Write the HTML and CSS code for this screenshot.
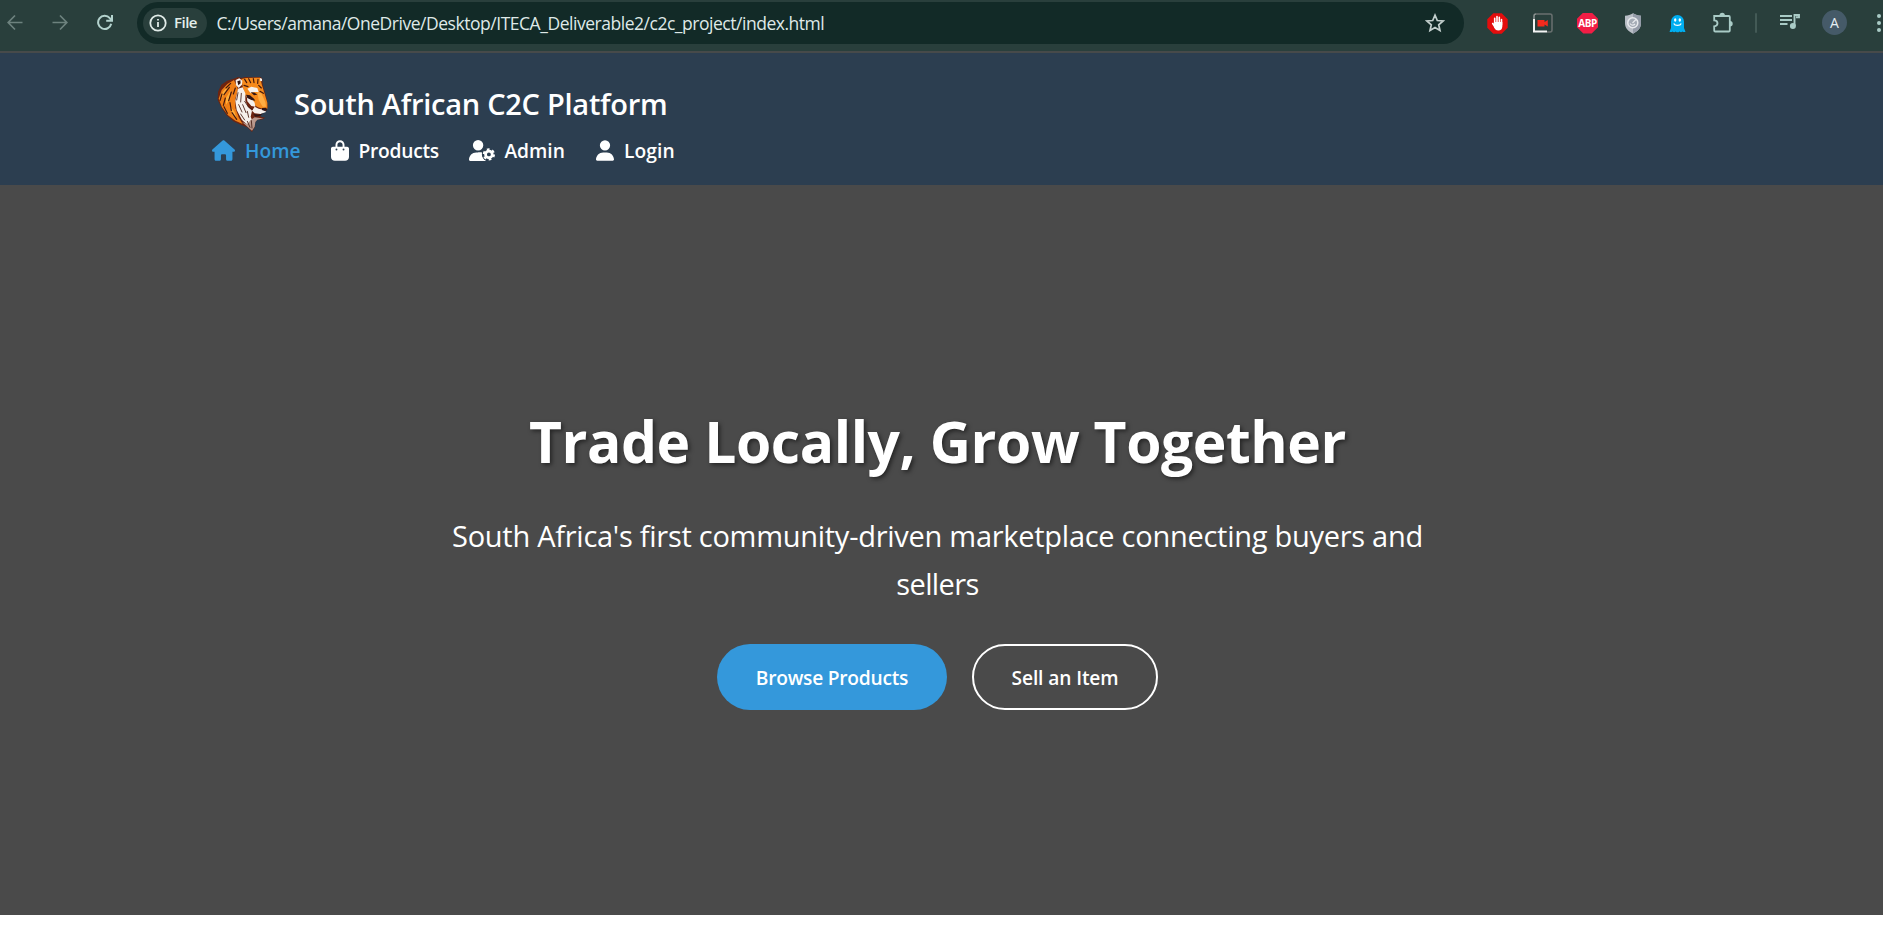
FILE: index.html
```
<!DOCTYPE html>
<html lang="en">
<head>
<meta charset="utf-8">
<title>South African C2C Platform</title>
<link rel="stylesheet" href="styles.css">
</head>
<body>
<div class="toolbar">
  <div class="controls">
    <svg class="ctl dim" viewBox="0 0 16 16"><path d="M15.500 8H1.500M8 1 1.200 8 8 15"/></svg>
    <svg class="ctl dim" viewBox="0 0 16 16"><path d="M.5 8h14M8 1l6.800 7L8 15"/></svg>
    <svg class="ctl" viewBox="0 0 16 16"><path d="M14.200 9.200A6.600 6.600 0 1 1 12.800 3.600L14.500 5.500M15 .5v5.700H9.200"/></svg>
  </div>
  <div class="omnibox">
    <div class="chip">
      <svg class="info" viewBox="0 0 18 18"><circle cx="9" cy="9" r="7.700"/><path d="M9 8v5M9 5v1.600"/></svg>
      <span class="chip-label">File</span>
    </div>
    <span class="url">C:/Users/amana/OneDrive/Desktop/ITECA_Deliverable2/c2c_project/index.html</span>
    <svg class="star" viewBox="0 0 20 20"><path d="M10 2.200l2.300 5.300 5.800.5-4.400 3.800 1.300 5.700-5-3-5 3 1.300-5.700L1.900 8l5.800-.5z"/></svg>
  </div>
  <div class="extensions">
    <div class="ext"><svg width="21" height="21" viewBox="0 0 21 21"><path fill="#e40d0d" d="M6.300.3h8.400l6 6v8.400l-6 6H6.300l-6-6V6.300z"/><path d="M7.700 11V5.300M10 10V3.600M12.300 10V4.300M14.500 12V6.500M5.700 10.500l2.600 4" stroke="#fff" stroke-width="1.600" stroke-linecap="round"/><path fill="#fff" d="M6.900 9h8.400v4.500c0 2.600-1.500 4-4 4-2.300 0-3.200-1-4.100-3z"/></svg></div>
    <div class="ext"><svg width="20" height="20" viewBox="0 0 20 20" fill="none"><path d="M3 1h14a2 2 0 0 1 2 2v14a2 2 0 0 1-2 2h-3" stroke="#69706f" stroke-width="1.500"/><path d="M1 6v12.500h13" stroke="#f4f4f4" stroke-width="2"/><path d="M1 6V3a2 2 0 0 1 2-2" stroke="#8b9291" stroke-width="1.500"/><path d="M4.500 7h7v2l3.300-2v6.500l-3.300-2v2h-7z" fill="#f42a1d"/></svg></div>
    <div class="ext"><div class="abp">ABP</div></div>
    <div class="ext"><svg width="18" height="21" viewBox="0 0 18 21"><path fill="#b9bec6" d="M9 .3c2.500 1.500 5 2.200 8 2.400v7.600c0 5-3.500 8.300-8 10.400C4.500 18.600 1 15.300 1 10.300V2.700C4 2.500 6.500 1.800 9 .3z"/><path fill="#959ca9" d="M9 .3c2.500 1.500 5 2.200 8 2.400v7.600c0 5-3.500 8.300-8 10.400z"/><circle cx="8.800" cy="9.700" r="5" fill="#a5acb6" stroke="#e8eaee" stroke-width="1.500"/><path d="M12 6.500 8.500 10M6 10.500a3 3 0 0 0 5 .5" stroke="#e8eaee" stroke-width="1.200" fill="none"/></svg></div>
    <div class="ext"><svg width="17" height="19" viewBox="0 0 17 19"><path fill="#00aef0" d="M2 7.500a6.500 6.500 0 0 1 13 0V14l1.500 3.700c-1.300.5-2.300.3-3-.3-.9 1-2.200 1-3 0-.9 1.200-2.900 1.200-3.800 0-.9 1-2.200 1-3.100 0-.8.6-1.900.8-3.100.3L2 14z"/><ellipse cx="6.200" cy="6" rx="1.200" ry="1.700" fill="#fff"/><ellipse cx="10.800" cy="6" rx="1.200" ry="1.700" fill="#fff"/><path d="M4.800 9.500c1 2.600 6.400 2.600 7.400 0" stroke="#fff" stroke-width="1.300" fill="none"/></svg></div>
    <div class="ext"><svg width="22" height="22" viewBox="0 0 22 22"><path d="M2.500 4h14.300q1 0 1 1v13.500q0 1-1 1H3.200q-1 0-1-1v-4.200c4.400-.3 4.400-5.600 0-5.900V4z" fill="none" stroke="#a9cbc6" stroke-width="1.800"/><path d="M7.500 3.500a2.700 2.700 0 0 1 5.400 0zM18 9a2.700 2.700 0 0 1 0 5.400z" fill="#a9cbc6"/></svg></div>
  </div>
  <div class="divider"></div>
  <svg class="media" viewBox="0 0 20 16"><path d="M0 2h12M0 6h12M0 10h7.500" stroke="#a9cbc6" stroke-width="1.800"/><path d="M14.500 12V1H19v2.200h-3" stroke="#a9cbc6" stroke-width="1.900" fill="none"/><circle cx="12.900" cy="12" r="3" fill="#a9cbc6"/></svg>
  <div class="avatar">A</div>
  <div class="menu"><i></i><i></i><i></i></div>
</div>

<header class="site-header">
  <div class="brand">
    <svg class="logo" viewBox="21 21 165 165">
      <path fill="#6e240f" d="M76 25L84 21 94 24 106 21 128 22 150 20 157 26 158 44 164 64 171 92 173 112 168 124 154 130 149 136 154 141 166 143 154 149 142 148 136 156 134 172 126 186 112 172 92 164 70 154 50 136 34 112 23 90 24 66 34 44 52 32z"/>
      <path fill="#f07f16" d="M72 30L52 42 35 60 26 86 36 112 54 136 76 152 98 162 86 142 76 114 76 86 84 58z"/>
      <path fill="#ffad3a" d="M56 46 38 66 32 86 44 72zM62 60 48 84 48 104 58 90zM62 110 66 134 80 148 74 126z"/>
      <path fill="#f58a1c" d="M94 27 110 24 150 23 156 46 164 72 172 98 172 116 158 116 144 112 134 106 120 96 106 76 98 50z"/>
      <path fill="#ffad43" d="M142 66 154 70 166 96 168 110 158 110 146 90z"/>
      <path fill="#f6f1ec" d="M77 30 88 25 97 32 96 44 86 54 78 46zM84 56 98 52 106 70 106 92 114 110 126 122 122 140 126 150 112 164 96 150 80 120 76 92zM112 56 124 50 142 54 146 66 132 66 122 70zM110 76 122 82 134 98 136 110 124 108 112 94zM134 110 146 116 164 120 168 126 152 132 134 130 126 122zM150 24 156 26 156 34 150 32z"/>
      <path fill="#b9988c" d="M96 156 112 162 122 150 134 142 150 144 160 145 142 149 136 156 134 170 126 182 114 172z"/>
      <path fill="#301515" d="M82 34 91 31 92 40 85 46zM108 74 120 76 132 86 136 92 124 90 112 84zM122 66 134 68 142 74 132 76zM156 114 169 113 171 120 164 123 156 120zM130 132 144 134 160 130 150 138 136 140z"/>
      <g fill="none" stroke="#41180f" stroke-linecap="round">
        <path stroke-width="3.500" d="M62 40 48 54M58 52 42 74M36 72 30 92M46 84 40 106M42 110 52 130M64 66 56 92M60 98 64 122M66 128 80 148M104 28 110 38M116 26 122 38M130 26 132 38M144 28 143 40M102 46 114 50M146 46 154 54M150 64 160 70M76 54 70 72"/>
        <path stroke-width="2.500" d="M104 94 116 112 128 118M84 68 80 90M94 70 92 96M86 104 96 126M98 104 108 128M112 124 116 142M92 132 104 150M112 154 120 172M124 152 126 174"/>
      </g>
    </svg>
    <span class="brand-name">South African C2C Platform</span>
  </div>
  <nav class="nav">
    <a class="nav-item active"><svg width="23" height="21" viewBox="0 0 576 512"><path d="M575.800 255.500c0 18-15 32.100-32 32.100h-32l.7 160.200c0 2.700-.2 5.400-.5 8.100V472c0 22.100-17.900 40-40 40H392c-22.100 0-40-17.900-40-40v-88c0-17.700-14.300-32-32-32h-64c-17.700 0-32 14.300-32 32v88c0 22.100-17.900 40-40 40h-80c-22.100 0-40-17.900-40-40V287.600H32c-18 0-32-14-32-32.100 0-9 3-17 10-24L266.400 8c7-7 15-8 22-8s15 2 21 7l255.400 224.500c8 7 12 15 11 24z"/></svg><span>Home</span></a>
    <a class="nav-item products"><svg width="18" height="21" viewBox="0 0 448 512"><path d="M160 112c0-35.300 28.700-64 64-64s64 28.700 64 64v48H160zm-48 48H48c-26.500 0-48 21.500-48 48v208c0 53 43 96 96 96h256c53 0 96-43 96-96V208c0-26.500-21.500-48-48-48h-64v-48C336 50.100 285.900 0 224 0S112 50.100 112 112zm24 48a24 24 0 1 1 0 48 24 24 0 1 1 0-48zm152 24a24 24 0 1 1 48 0 24 24 0 1 1-48 0z"/></svg><span>Products</span></a>
    <a class="nav-item admin"><svg width="26" height="21" viewBox="0 0 640 512"><path d="M224 256a128 128 0 1 0 0-256 128 128 0 1 0 0 256zm-45.700 48C79.800 304 0 383.800 0 482.300 0 498.700 13.300 512 29.700 512h388.600V304z"/><circle cx="490" cy="352" r="176" fill="#2c3e50"/><path d="M224 304h76c30 0 10 20 10 55 0 60 40 120 105 153H224z"/><circle cx="490" cy="352" r="82" fill="none" stroke="#fff" stroke-width="68"/><circle cx="490" cy="352" r="126" fill="none" stroke="#fff" stroke-width="50" stroke-dasharray="66 66"/></svg><span>Admin</span></a>
    <a class="nav-item login"><svg width="18" height="21" viewBox="0 0 448 512"><path d="M224 256a128 128 0 1 0 0-256 128 128 0 1 0 0 256zm-45.700 48C79.800 304 0 383.800 0 482.300 0 498.700 13.300 512 29.700 512h388.600c16.400 0 29.700-13.300 29.700-29.700C448 383.800 368.200 304 269.700 304z"/></svg><span>Login</span></a>
  </nav>
</header>

<main class="hero">
  <h1 class="hero-title">Trade Locally, Grow Together</h1>
  <p class="hero-text">South Africa's first community-driven marketplace connecting buyers and<br><span class="last-line">sellers</span></p>
  <div class="actions">
    <a class="btn primary">Browse Products</a>
    <a class="btn outline">Sell an Item</a>
  </div>
</main>
</body>
</html>
```
FILE: styles.css
```
* { box-sizing: border-box; }
body {
  margin: 0;
  background: #fff;
  font-family: "Open Sans", "Noto Sans", sans-serif;
  overflow: hidden;
}
svg { display: block; flex: none; }

.toolbar {
  display: flex;
  height: 53px;
  padding: 2px 0 0 7px;
  background: #293f3c;
  border-bottom: 2px solid #474a4a;
  overflow: hidden;
}
.toolbar > * { flex: none; }
.controls { display: flex; gap: 29px; width: 130px; padding-top: 12px; }
.ctl { width: 16px; height: 17px; fill: none; stroke: #b4d3ce; stroke-width: 2; }
.dim { stroke: #6d827e; stroke-width: 1.7; }
.omnibox {
  display: flex;
  align-items: center;
  width: 1327px;
  height: 42px;
  padding: 0 19px 0 6px;
  border-radius: 21px;
  background: #122a27;
}
.chip {
  display: flex;
  align-items: center;
  gap: 7px;
  width: 64px;
  height: 30px;
  padding-left: 6px;
  border-radius: 15px;
  background: #293f3c;
}
.info { width: 18px; height: 18px; fill: none; stroke: #e0ebe8; stroke-width: 1.8; }
.chip-label { color: #e3eeeb; font-size: 15px; font-weight: 600; line-height: 28px; letter-spacing: -0.5px; padding-bottom: 2px; }
.url { flex: 1; padding-left: 9.5px; color: #dfe9e7; font-size: 17.5px; line-height: 43px; letter-spacing: -0.47px; white-space: nowrap; }
.star { width: 20px; height: 20px; fill: none; stroke: #c3cfcd; stroke-width: 1.7; }
.extensions { display: flex; height: 42px; padding-left: 11px; }
.ext { display: flex; align-items: center; justify-content: center; width: 45px; height: 42px; }
.abp {
  width: 21px;
  height: 21px;
  background: #f21d45;
  clip-path: polygon(30% 0, 70% 0, 100% 30%, 100% 70%, 70% 100%, 30% 100%, 0 70%, 0 30%);
  color: #fff;
  font: 700 10px/21px "Open Sans", sans-serif;
  letter-spacing: -0.4px;
  text-align: center;
}
.divider { width: 2px; height: 20px; margin: 11px 23px 0 10px; background: #435a56; border-radius: 1px; }
.media { width: 20px; height: 16px; margin: 12px 22px 0 0; }
.avatar {
  width: 25px;
  height: 25px;
  margin-top: 8px;
  border-radius: 50%;
  background: #455a68;
  color: #e6eef2;
  font: 400 14px/26px "Open Sans", sans-serif;
  text-align: center;
}
.menu { display: flex; flex-direction: column; gap: 3px; margin: 12px 0 0 30px; }
.menu i { width: 4px; height: 4px; border-radius: 50%; background: #a9cbc6; }

.site-header { height: 132px; padding: 24px 0 0 212px; background: #2c3e50; }
.brand { display: flex; gap: 22px; height: 58px; padding-left: 5px; }
.logo { width: 55px; height: 55px; }
.brand-name { color: #fff; font-size: 29px; font-weight: 600; line-height: 53px; letter-spacing: -0.27px; white-space: nowrap; }
.nav { display: flex; gap: 30px; height: 30px; }
.nav-item { display: flex; align-items: center; gap: 10px; height: 30px; color: #fff; font-size: 19.2px; font-weight: 600; line-height: 30px; }
.nav-item svg { fill: currentColor; }
.nav-item span { padding-top: 2px; }
.active { color: #3498db; }
.products { letter-spacing: -0.25px; }
.admin { gap: 9.5px; }
.login { margin-left: 1px; letter-spacing: 0.1px; }

.hero {
  display: flex;
  flex-direction: column;
  align-items: center;
  height: 730px;
  padding: 221px 8px 0 0;
  background: #4a4a4a;
  color: #fff;
  white-space: nowrap;
}
.hero-title { margin: 0 0 36px; font-size: 57px; font-weight: 700; line-height: 70px; letter-spacing: -0.44px; text-shadow: 2px 2px 4px rgba(0, 0, 0, 0.5); }
.hero-text { margin: 0 0 36px; font-size: 29px; line-height: 48px; letter-spacing: -0.27px; text-align: center; }
.last-line { letter-spacing: -0.6px; }
.actions { display: flex; gap: 25px; }
.btn { display: flex; align-items: center; justify-content: center; height: 66px; border-radius: 33px; font-size: 19.2px; font-weight: 600; letter-spacing: -0.24px; }
.primary { width: 230px; background: #3498db; }
.outline { width: 186px; border: 2px solid #fff; letter-spacing: -0.12px; }
```
